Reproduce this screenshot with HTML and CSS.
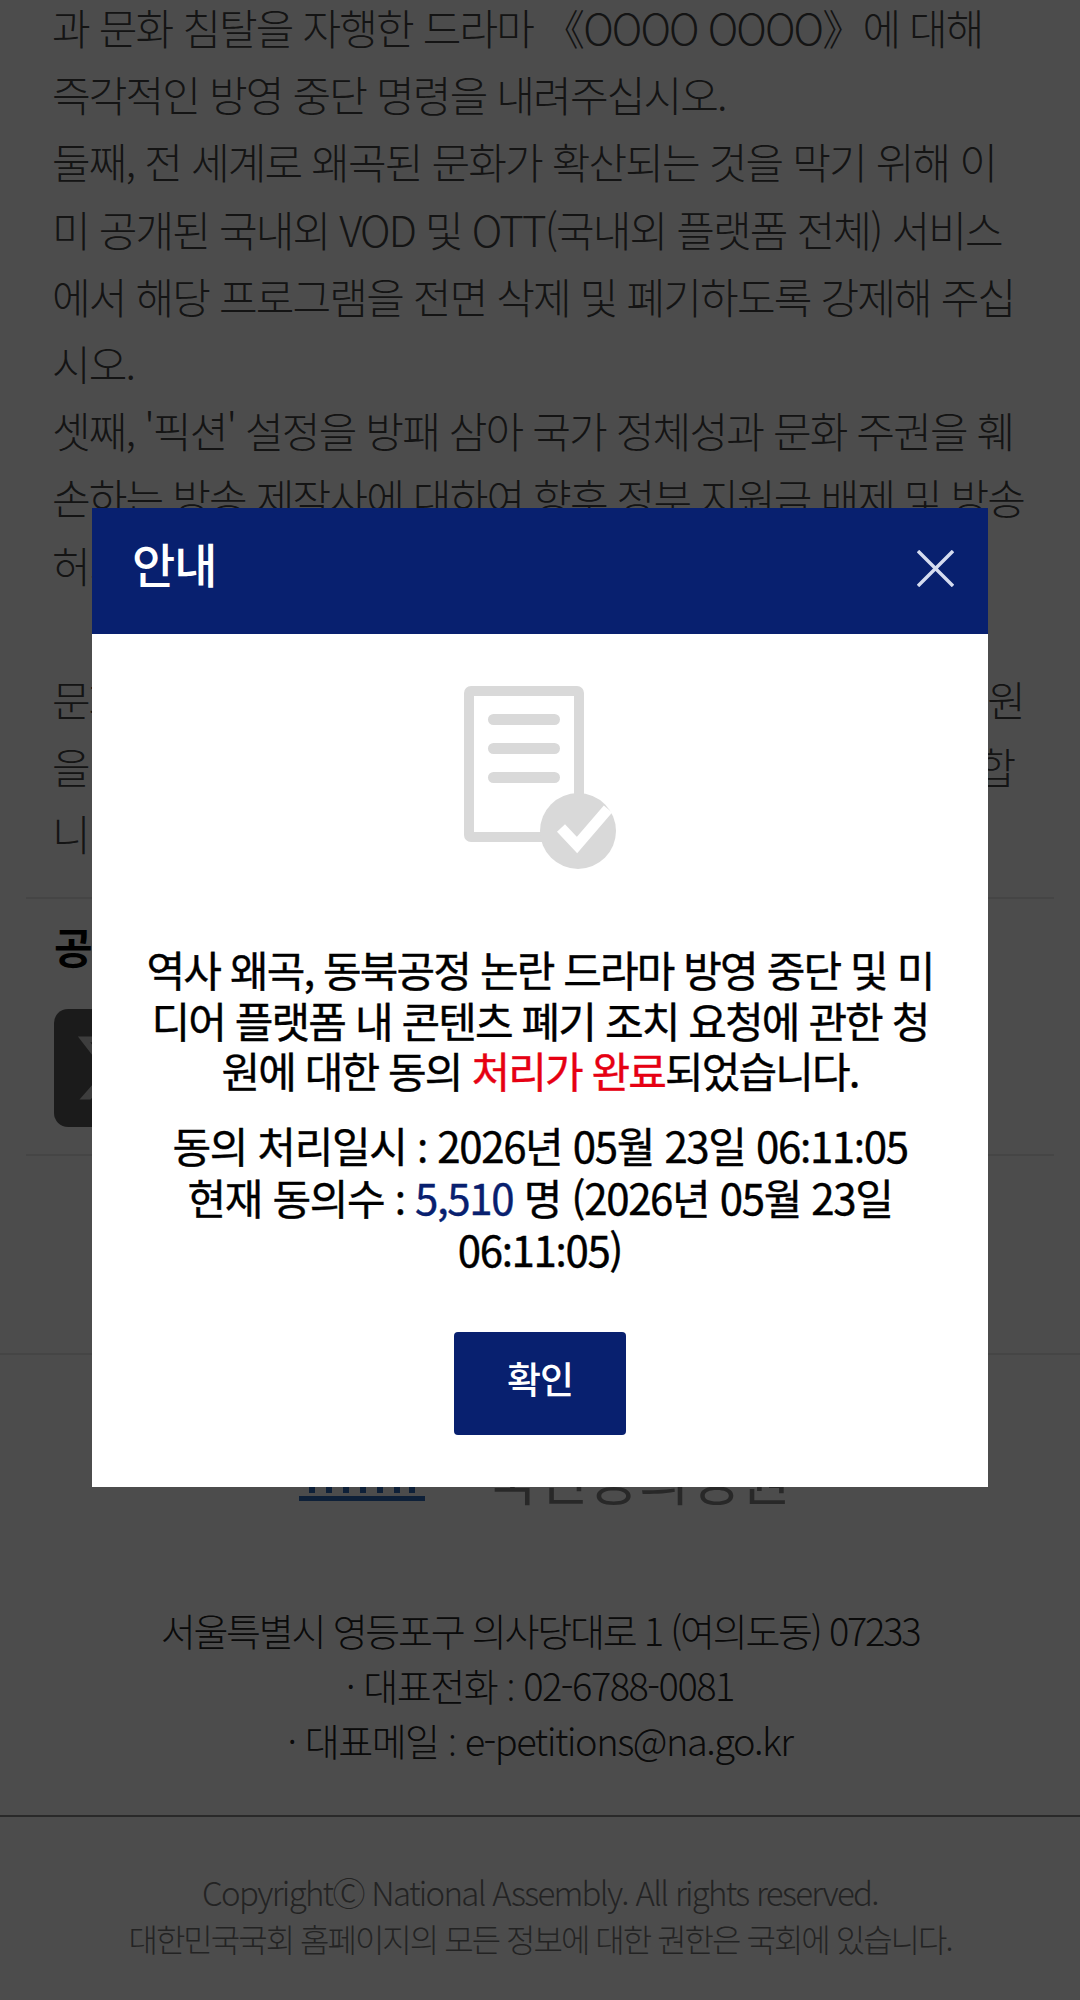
FILE: index.html
```html
<!DOCTYPE html>
<html lang="ko">
<head>
    <meta charset="UTF-8">
    <meta name="viewport" content="width=device-width, initial-scale=1.0">
    <title>국민동의청원</title>
    <link rel="stylesheet" href="styles.css">
</head>
<body>
    <div class="page">
        <div class="petition-text">
            과 문화 침탈을 자행한 드라마 《OOOO OOOO》에 대해<br>
            즉각적인 방영 중단 명령을 내려주십시오.<br>
            둘째, 전 세계로 왜곡된 문화가 확산되는 것을 막기 위해 이<br>
            미 공개된 국내외 VOD 및 OTT(국내외 플랫폼 전체) 서비스<br>
            에서 해당 프로그램을 전면 삭제 및 폐기하도록 강제해 주십<br>
            시오.<br>
            셋째, '픽션' 설정을 방패 삼아 국가 정체성과 문화 주권을 훼<br>
            손하는 방송 제작사에 대하여 향후 정부 지원금 배제 및 방송<br>
            허가 취소 등 강력한 제재를 가해 주십시오.<br>
            <br>
            문화는 곧 국가 정체성을 지키는 근간 이기에 국회 적극 지원<br>
            을 요청드리며 이에 국민의 뜻을 모아 청원을 제출하고자 합<br>
            니다.
        </div>

        <div class="share">
            <h3 class="share-title">공유하기</h3>
            <a class="share-btn" href="#">
                <svg viewBox="0 0 24 24" width="78" height="78"><path fill="#ccc" d="M18.2 2.3h3.3l-7.2 8.2L22.8 21.7h-6.6l-5.2-6.8-5.9 6.8H1.7l7.7-8.8L1.2 2.3H8l4.7 6.2zM17 19.8h1.8L7 4.1H5z"/></svg>
            </a>
        </div>

        <footer class="footer">
            <div class="footer-logo">
                <svg class="logo-mark" viewBox="0 0 126 40" width="126" height="40">
                    <path fill="#2f6bbd" d="M10 6h6v26h-6zM27 6h6v26h-6zM44 6h6v26h-6zM61 6h6v26h-6zM78 6h6v26h-6zM95 6h6v26h-6zM110 6h6v26h-6zM0 35h126v5H0z"/>
                </svg>
                <span class="logo-text">국민동의청원</span>
            </div>
            <address class="footer-address">
                서울특별시 영등포구 의사당대로 1 (여의도동) 07233<br>
                <span class="footer-contact">· 대표전화 <span class="colon">:</span> 02-6788-0081</span><br>
                <span class="footer-contact">· 대표메일 <span class="colon">:</span> e-petitions@na.go.kr</span>
            </address>
            <div class="footer-copy">
                <p class="footer-copy-en">Copyright&#9400; National Assembly. All rights reserved.</p>
                <p class="footer-copy-ko">대한민국국회 홈페이지의 모든 정보에 대한 권한은 국회에 있습니다.</p>
            </div>
        </footer>
    </div>

    <div class="overlay">
        <div class="modal">
            <div class="modal-head">
                <h2>안내</h2>
                <button class="modal-close" aria-label="닫기">
                    <svg viewBox="0 0 37 37" width="37" height="37"><path d="M1 1l35 35M36 1L1 36" stroke="#d5dcf0" stroke-width="3.4" fill="none"/></svg>
                </button>
            </div>
            <div class="modal-body">
                <svg class="modal-icon" viewBox="0 0 152 184" width="152" height="184">
                    <rect x="5" y="5" width="110" height="146" rx="2" fill="none" stroke="#d9d9d9" stroke-width="10"/>
                    <rect x="24" y="28" width="72" height="11" rx="5.5" fill="#d9d9d9"/>
                    <rect x="24" y="57" width="72" height="11" rx="5.5" fill="#d9d9d9"/>
                    <rect x="24" y="86" width="72" height="11" rx="5.5" fill="#d9d9d9"/>
                    <circle cx="114" cy="145" r="38" fill="#d9d9d9"/>
                    <path d="M97 142l16 17 31-36" fill="none" stroke="#fff" stroke-width="11"/>
                </svg>
                <p class="modal-msg">역사 왜곡, 동북공정 논란 드라마 방영 중단 및 미디어 플랫폼 내 콘텐츠 폐기 조치 요청에 관한 청원에 대한 동의 <em class="red">처리가 완료</em>되었습니다.</p>
                <p class="modal-info">동의 처리일시 <span class="colon">:</span> 2026년 05월 23일 06<span class="colon">:</span>11<span class="colon">:</span>05<br>현재 동의수 <span class="colon">:</span> <em class="blue">5,510</em> 명 (2026년 05월 23일 06<span class="colon">:</span>11<span class="colon">:</span>05)</p>
                <button class="modal-ok">확인</button>
            </div>
        </div>
    </div>
</body>
</html>
```

FILE: styles.css
```css
* {
    box-sizing: border-box;
}

body {
    margin: 0;
    height: 2000px;
    overflow: hidden;
    background-color: #fff;
    color: #444;
    font-family: "Noto Sans CJK KR", "Noto Sans", sans-serif;
    font-weight: 300;
}

/* the CJK colon sits too high next to digits */
.colon {
    font-family: "Noto Sans", sans-serif;
    line-height: 0;
}

.petition-text {
    margin-top: -7px;
    padding: 0 52px;
    font-size: 42px;
    line-height: 67.2px;
    letter-spacing: -1.85px;
    white-space: nowrap;
    overflow: hidden;
}

.share {
    margin: 30px 26px 0;
    padding: 19px 28px 28px;
    height: 259px;
    border-top: 2px solid #e6e6e6;
    border-bottom: 2px solid #e6e6e6;
}

.share-title {
    margin: 0 0 35px;
    font-size: 42px;
    line-height: 56px;
    font-weight: 700;
    color: #000;
}

.share-btn {
    display: flex;
    align-items: center;
    justify-content: center;
    width: 118px;
    height: 118px;
    border-radius: 14px;
    background-color: #5d5d5d;
}

.footer {
    margin-top: 197px;
    border-top: 2px solid #e6e6e6;
    text-align: center;
}

.footer-logo {
    display: flex;
    justify-content: center;
    align-items: flex-end;
    gap: 62px;
    height: 146px;
    padding-left: 10px;
}

.logo-text {
    font-size: 55px;
    line-height: 50px;
    font-weight: 400;
    color: #888;
}

.footer-address {
    margin-top: 101px;
    font-style: normal;
    font-size: 38px;
    line-height: 55px;
    letter-spacing: -2.25px;
    color: #222;
}

.footer-contact {
    letter-spacing: -1.5px;
}

.footer-copy {
    margin-top: 48px;
    padding-top: 52px;
    border-top: 2px solid #8a8a8a;
    line-height: 46px;
    color: #777;
}

.footer-copy p {
    margin: 0;
}

.footer-copy-en {
    font-size: 33px;
    letter-spacing: -1.7px;
}

.footer-copy-ko {
    font-size: 32px;
    letter-spacing: -2px;
}

.overlay {
    position: fixed;
    top: 0;
    left: 0;
    right: 0;
    bottom: 0;
    padding-top: 508px;
    display: flex;
    justify-content: center;
    align-items: flex-start;
    background-color: rgba(0, 0, 0, 0.7);
}

.modal {
    width: 896px;
    background-color: #fff;
    color: #000;
}

.modal-head {
    display: flex;
    align-items: center;
    justify-content: space-between;
    height: 126px;
    padding: 0 34px 5px 40px;
    background-color: #08206f;
    color: #fff;
}

.modal-head h2 {
    margin: 0 0 12px;
    font-size: 47px;
    font-weight: 500;
    letter-spacing: -1px;
}

.modal-close {
    display: flex;
    padding: 0;
    border: none;
    background: none;
}

.modal-body {
    display: flex;
    flex-direction: column;
    align-items: center;
    padding: 52px 50px 52px;
}

.modal-msg {
    margin: 74px 0 0;
    font-size: 42px;
    font-weight: 400;
    line-height: 50.5px;
    letter-spacing: -1.9px;
    text-align: center;
    -webkit-text-stroke: 0.4px #000;
}

.modal-info {
    margin: 23px 0 0;
    font-size: 42px;
    font-weight: 400;
    line-height: 52px;
    letter-spacing: -1.35px;
    text-align: center;
    -webkit-text-stroke: 0.4px #000;
}

.modal-msg em,
.modal-info em {
    font-style: normal;
}

.red {
    color: #e60012;
    -webkit-text-stroke-color: #e60012;
}

.blue {
    color: #08206f;
    -webkit-text-stroke-color: #08206f;
}

.modal-ok {
    width: 172px;
    height: 103px;
    margin-top: 57px;
    padding: 0 0 10px;
    border: none;
    border-radius: 4px;
    background-color: #08206f;
    color: #fff;
    font-family: inherit;
    font-size: 37px;
    font-weight: 500;
    letter-spacing: -1px;
}
```
